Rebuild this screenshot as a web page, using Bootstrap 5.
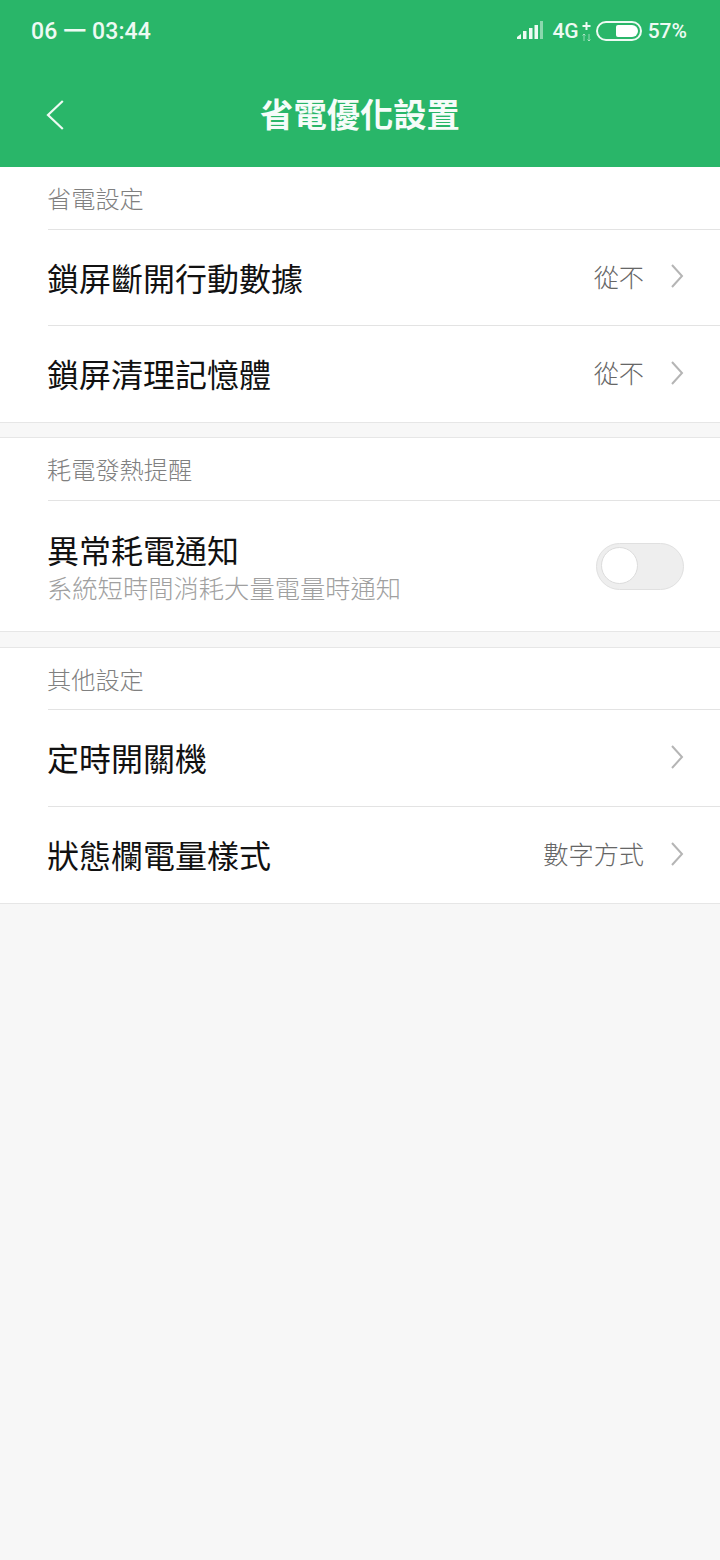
<!DOCTYPE html>
<html lang="zh-Hant">
<head>
  <meta charset="UTF-8" />
  <meta name="viewport" content="width=device-width, initial-scale=1.0"/>
  <title>省電優化設置</title>
  <link href="https://cdn.jsdelivr.net/npm/bootstrap@5.3.0/dist/css/bootstrap.min.css" rel="stylesheet">
  <style>
    body {
      background-color: #f7f7f7;
      font-family: Roboto, "Noto Sans CJK TC", "Noto Sans CJK SC", sans-serif;
      height: 1560px;
      overflow: hidden;
    }
    .app-head {
      background-color: #29b669;
      height: 167px;
      color: #fff;
    }
    .status-row {
      height: 62px;
      padding: 2px 33px 0 31px;
      font-size: 23px;
      font-weight: 500;
      color: #eefaf3;
    }
    .status-time { letter-spacing: .1px; }
    .status-right { font-size: 21px; }
    .signal-icon { margin-right: 8px; margin-bottom: 2px; }
    .battery-icon { margin-left: 4px; margin-right: 6px; margin-bottom: 3px; }
    .title-row { height: 105px; padding-top: 3px; }
    .back-icon { left: 45px; top: 37px; }
    .page-title { font-size: 33.3px; font-weight: 700; line-height: 1; color: #f6fcf9; }
    .setting-group {
      background: #fff;
      padding-left: 48px;
      border-bottom: 1px solid #e6e6e6;
    }
    .setting-group + .setting-group {
      margin-top: 14px;
      border-top: 1px solid #e6e6e6;
    }
    .setting-group.last-group { margin-top: 15px; }
    .group-label {
      height: 62px;
      font-size: 24.2px;
      font-weight: 300;
      color: #808080;
      line-height: 1;
      padding-top: 20.5px;
      margin-left: -1px;
    }
    .last-group .group-label { height: 61px; }
    .setting-row {
      height: 97px;
      border-top: 1px solid #e3e3e3;
      padding-right: 36px;
    }
    .first-row { height: 96px; }
    .setting-row.tall { height: 131px; padding-top: 3px; }
    .setting-name { font-size: 32px; color: #111; line-height: 1; padding-top: 4px; margin-left: -1px; }
    .setting-sub { font-size: 25.3px; font-weight: 300; color: #a0a0a0; line-height: 1; margin-top: 9px; margin-left: -1px; }
    .setting-val { font-size: 25.2px; font-weight: 300; color: #666; line-height: 1; margin-right: 26px; padding-top: 2px; }
    .chevron { display: block; margin-top: -2px; }
    .off-switch {
      width: 88px;
      height: 47px;
      margin-top: -3px;
      background: #eeeeee;
      border: 1px solid #e0e0e0;
      border-radius: 24px;
      padding: 3px 4px;
    }
    .switch-knob {
      width: 37px;
      height: 37px;
      background: #fff;
      border: 1px solid #dcdcdc;
      border-radius: 50%;
    }
  </style>
</head>
<body>
  <header class="app-head">
    <div class="status-row d-flex justify-content-between align-items-center">
      <span class="status-time">06 一 03:44</span>
      <div class="status-right d-flex align-items-center">
        <svg width="28" height="20" viewBox="0 0 28 20" class="signal-icon">
          <path d="M1 18v-2l4-3v5z" fill="#eefaf3"/>
          <rect x="7" y="10" width="3.500" height="8" fill="#eefaf3"/>
          <rect x="13" y="7" width="3.500" height="11" fill="#eefaf3"/>
          <rect x="18.500" y="4" width="3.500" height="14" fill="#eefaf3"/>
          <rect x="24" y="0" width="3" height="18" fill="#eefaf3" opacity=".5"/>
        </svg>
        <span>4G</span>
        <svg width="13" height="22" viewBox="0 0 13 22">
          <path d="M7.500 1v8M3.500 5h8" stroke="#eefaf3" stroke-width="2" fill="none"/>
          <path d="M5 20v-7M3.500 14.500 5 13l1.500 1.500M10 13v7M8.500 18.500 10 20l1.500-1.500" stroke="#eefaf3" stroke-width="1" fill="none" opacity=".55"/>
        </svg>
        <svg width="46" height="20" viewBox="0 0 46 20" class="battery-icon">
          <rect x="1" y="1" width="44" height="18" rx="9" fill="none" stroke="#eefaf3" stroke-width="2"/>
          <path d="M20 6a2 2 0 0 1 2-2h14a6 6 0 0 1 0 12H22a2 2 0 0 1-2-2z" fill="#fff"/>
        </svg>
        <span>57%</span>
      </div>
    </div>
    <div class="title-row position-relative d-flex justify-content-center align-items-center">
      <svg class="back-icon position-absolute" width="20" height="32" viewBox="0 0 20 32">
        <path d="M17.800 2 3 16l14.800 14" stroke="#eefaf3" stroke-width="2.200" fill="none"/>
      </svg>
      <h1 class="page-title m-0">省電優化設置</h1>
    </div>
  </header>

  <section class="setting-group">
    <div class="group-label">省電設定</div>
    <div class="setting-row first-row d-flex align-items-center justify-content-between">
      <span class="setting-name">鎖屏斷開行動數據</span>
      <div class="d-flex align-items-center">
        <span class="setting-val">從不</span>
        <svg class="chevron" width="14" height="26" viewBox="0 0 14 26"><path d="M2 2l10 11L2 24" stroke="#b5b5b5" stroke-width="2" fill="none"/></svg>
      </div>
    </div>
    <div class="setting-row d-flex align-items-center justify-content-between">
      <span class="setting-name">鎖屏清理記憶體</span>
      <div class="d-flex align-items-center">
        <span class="setting-val">從不</span>
        <svg class="chevron" width="14" height="26" viewBox="0 0 14 26"><path d="M2 2l10 11L2 24" stroke="#b5b5b5" stroke-width="2" fill="none"/></svg>
      </div>
    </div>
  </section>

  <section class="setting-group">
    <div class="group-label">耗電發熱提醒</div>
    <div class="setting-row tall d-flex align-items-center justify-content-between">
      <div>
        <div class="setting-name">異常耗電通知</div>
        <div class="setting-sub">系統短時間消耗大量電量時通知</div>
      </div>
      <div class="off-switch"><div class="switch-knob"></div></div>
    </div>
  </section>

  <section class="setting-group last-group">
    <div class="group-label">其他設定</div>
    <div class="setting-row d-flex align-items-center justify-content-between">
      <span class="setting-name">定時開關機</span>
      <svg class="chevron" width="14" height="26" viewBox="0 0 14 26"><path d="M2 2l10 11L2 24" stroke="#b5b5b5" stroke-width="2" fill="none"/></svg>
    </div>
    <div class="setting-row d-flex align-items-center justify-content-between">
      <span class="setting-name">狀態欄電量樣式</span>
      <div class="d-flex align-items-center">
        <span class="setting-val">數字方式</span>
        <svg class="chevron" width="14" height="26" viewBox="0 0 14 26"><path d="M2 2l10 11L2 24" stroke="#b5b5b5" stroke-width="2" fill="none"/></svg>
      </div>
    </div>
  </section>

  <script src="https://cdn.jsdelivr.net/npm/bootstrap@5.3.0/dist/js/bootstrap.bundle.min.js"></script>
</body>
</html>
